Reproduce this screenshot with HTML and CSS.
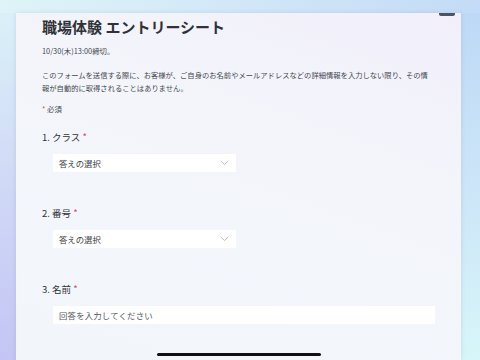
FILE: index.html
```html
<!DOCTYPE html>
<html lang="ja">
<head>
    <meta charset="UTF-8">
    <meta name="viewport" content="width=device-width, initial-scale=1.0">
    <title>職場体験 エントリーシート</title>
    <link rel="stylesheet" href="styles.css">
</head>
<body>
    <div class="screen">
        <div class="form-card">
            <div class="card-tab"></div>
            <h1>職場体験 エントリーシート</h1>
            <p class="deadline">10/30(木)13:00締切。</p>
            <p class="notice">このフォームを送信する際に、お客様が、ご自身のお名前やメールアドレスなどの詳細情報を入力しない限り、その情報が自動的に取得されることはありません。</p>
            <p class="required-note"><span class="star">*</span> 必須</p>

            <div class="question">
                <div class="q-label">1. クラス <span class="star">*</span></div>
                <div class="select-box">
                    <span>答えの選択</span>
                    <svg class="chevron" width="9" height="6" viewBox="0 0 9 6"><path d="M0.8 1 L4.5 4.6 L8.2 1" fill="none" stroke="#b3b6bd" stroke-width="0.9"/></svg>
                </div>
            </div>

            <div class="question">
                <div class="q-label">2. 番号 <span class="star">*</span></div>
                <div class="select-box">
                    <span>答えの選択</span>
                    <svg class="chevron" width="9" height="6" viewBox="0 0 9 6"><path d="M0.8 1 L4.5 4.6 L8.2 1" fill="none" stroke="#b3b6bd" stroke-width="0.9"/></svg>
                </div>
            </div>

            <div class="question">
                <div class="q-label">3. 名前 <span class="star">*</span></div>
                <div class="text-box">回答を入力してください</div>
            </div>
        </div>
        <div class="home-bar"></div>
    </div>
</body>
</html>
```

FILE: styles.css
```css
body {
    margin: 0;
    font-family: "Noto Sans CJK JP", "Noto Sans", sans-serif;
    color: #3a3d44;
}
.screen {
    position: relative;
    width: 480px;
    height: 360px;
    overflow: hidden;
    box-sizing: border-box;
    padding: 13px 19px 0 16px;
    background:
        linear-gradient(90deg, #dff4f8, #c3dbf6) top / 100% 13px no-repeat,
        linear-gradient(180deg, #dbf2f8 0%, #cfd7f6 55%, #c4c5f4 100%) left / 50% 100% no-repeat,
        linear-gradient(180deg, #bdd8f6 0%, #cde6f8 55%, #d7f6f9 100%) right / 50% 100% no-repeat;
}
.form-card {
    position: relative;
    height: 100%;
    box-sizing: border-box;
    padding: 4px 26px 0 26px;
    background: linear-gradient(200deg, #f2effb 0%, #f3f5fb 35%, #f2f6fb 100%);
    box-shadow: 0 0 4px rgba(90, 100, 150, 0.18);
}
.card-tab {
    position: absolute;
    top: 0;
    right: 6px;
    width: 16px;
    height: 3px;
    background-color: #4b5263;
    border-radius: 0 0 2px 2px;
}
.form-card h1 {
    margin: 0;
    font-size: 15px;
    line-height: 20px;
    font-weight: bold;
    color: #303238;
}
.deadline {
    margin: 8px 0 0 0;
    font-size: 7.4px;
    line-height: 12px;
    color: #45484f;
}
.notice {
    margin: 12px 0 0 0;
    max-width: 392px;
    font-size: 7.3px;
    line-height: 13px;
    color: #45484f;
}
.required-note {
    margin: 8px 0 0 0;
    font-size: 7.4px;
    line-height: 12px;
    color: #45484f;
}
.star {
    color: #d9455b;
}
.question {
    margin-top: 15px;
}
.question + .question {
    margin-top: 34px;
}
.q-label {
    font-size: 9.5px;
    line-height: 14px;
    color: #303238;
    margin-bottom: 10px;
}
.select-box,
.text-box {
    margin-left: 11px;
    height: 18px;
    box-sizing: border-box;
    padding: 0 6px;
    background-color: #ffffff;
    font-size: 8.4px;
    line-height: 18px;
    color: #3c3f46;
}
.select-box {
    width: 183px;
    display: flex;
    justify-content: space-between;
    align-items: center;
}
.chevron {
    margin-right: 1px;
}
.text-box {
    width: 382px;
    color: #55585f;
    letter-spacing: 0.2px;
}
.home-bar {
    position: absolute;
    left: 157px;
    bottom: 4px;
    width: 164px;
    height: 3px;
    border-radius: 2px;
    background-color: #111111;
}
```
